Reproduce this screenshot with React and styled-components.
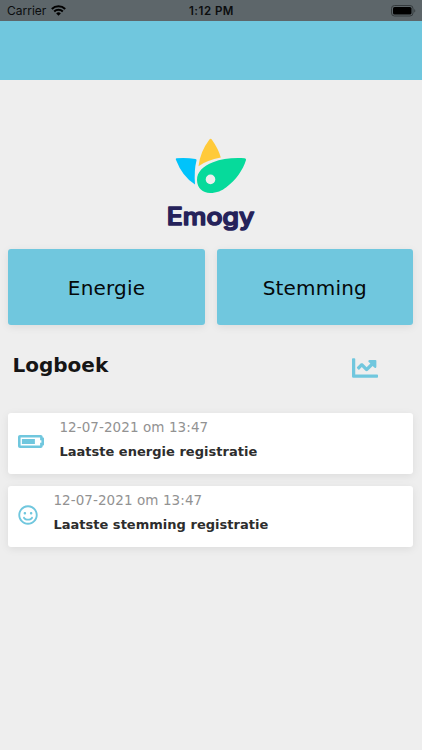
import React from "react";
import styled, { createGlobalStyle } from "styled-components";
import { FaChartLine, FaBatteryThreeQuarters, FaRegSmile } from "react-icons/fa";

const GlobalStyle = createGlobalStyle`
  * { box-sizing: border-box; }
  body { margin: 0; background: #eeeeee; }
`;

const Screen = styled.div`
  display: flex;
  flex-direction: column;
  width: 100%;
  height: 750px;
  background: #eeeeee;
  font-family: Verdana, "DejaVu Sans", sans-serif;
  overflow: hidden;
`;

const StatusBar = styled.div`
  display: grid;
  grid-template-columns: 1fr auto 1fr;
  align-items: center;
  flex: none;
  height: 21px;
  padding: 1px 6px 0 7px;
  background: #5d666a;
  color: #0b0d0e;
  font: 400 12px/20px Inter, sans-serif;
`;

const Carrier = styled.div`
  display: flex;
  align-items: center;
  gap: 5px;
`;

const Clock = styled.div`
  font-weight: 600;
  font-size: 11.5px;
  letter-spacing: 0.5px;
`;

const WifiIcon = styled.svg`
  margin-bottom: 2px;
`;

const BatteryLevel = styled.svg`
  justify-self: end;
  margin-bottom: 1px;
`;

const Header = styled.header`
  flex: none;
  height: 59px;
  background: #70c7de;
`;

const Logo = styled.svg`
  display: block;
  flex: none;
  width: 100px;
  height: 110px;
  margin: 50px 0 0 160px;
`;

const Actions = styled.div`
  display: grid;
  grid-template-columns: 1fr 1fr;
  gap: 12px;
  margin: 9px 9px 0 8.4px;
`;

const ActionButton = styled.button`
  height: 76px;
  padding: 2px 0 0;
  border: 0;
  border-radius: 3px;
  background: #70c7de;
  box-shadow: 0 2px 8px rgba(0, 0, 0, 0.08);
  color: #05090a;
  font: 400 20px/24px Verdana, "DejaVu Sans", sans-serif;
  letter-spacing: 0.2px;
`;

const SectionHead = styled.div`
  display: flex;
  justify-content: space-between;
  align-items: center;
  height: 30px;
  margin: 25px 43.6px 0 12.5px;
  color: #70c7de;
`;

const SectionTitle = styled.h2`
  margin: 0;
  color: #151515;
  font-size: 20px;
  line-height: 30px;
`;

const ChartIcon = styled(FaChartLine)`
  margin-top: 6px;
`;

const LogList = styled.div`
  display: flex;
  flex-direction: column;
  gap: 12px;
  margin: 33px 9px 0 8.4px;
`;

const LogCard = styled.article`
  display: flex;
  align-items: center;
  gap: 15.4px;
  height: 61px;
  padding: 0 0 4px 9.6px;
  border-radius: 3px;
  background: #ffffff;
  box-shadow: 0 2px 8px rgba(0, 0, 0, 0.08);
  color: #70c7de;
`;

const LogText = styled.div`
  padding-bottom: 5px;
`;

const LogDate = styled.div`
  color: #929292;
  font-size: 13.5px;
  line-height: 24px;
  letter-spacing: 0.08px;
`;

const LogTitle = styled.div`
  color: #2d2d2d;
  font-size: 13px;
  font-weight: 700;
  line-height: 25px;
  letter-spacing: 0.02px;
`;

const BatteryIcon = styled(FaBatteryThreeQuarters)`
  width: 26px;
  height: 21px;
`;

const SmileIcon = styled(FaRegSmile)`
  width: 20px;
  height: 20px;
`;

const entries = [
  { id: "energy", Icon: BatteryIcon, title: "Laatste energie registratie" },
  { id: "mood", Icon: SmileIcon, title: "Laatste stemming registratie" },
];

export default function App() {
  return (
    <>
      <GlobalStyle />
      <Screen>
        <StatusBar>
          <Carrier>
            Carrier
            <WifiIcon width="15" height="11" viewBox="0 0 15 11" fill="none" stroke="#000" strokeWidth="2">
              <path d="M.8 4a9.6 9.6 0 0 1 13.4 0M3.2 6.5a6.1 6.1 0 0 1 8.6 0" />
              <path d="M5.2 8.4a3.3 3.3 0 0 1 4.6 0L7.5 10.7z" fill="#000" stroke="none" />
            </WifiIcon>
          </Carrier>
          <Clock>1:12 PM</Clock>
          <BatteryLevel width="25" height="12" viewBox="0 0 25 12">
            <rect x=".5" y=".5" width="21.5" height="10.5" rx="3" fill="none" stroke="#343a3d" />
            <rect x="2" y="2" width="18.5" height="7.5" rx="1.6" fill="#000" />
            <path d="M23.3 4v3.6c1.3-.5 1.3-3.1 0-3.6z" fill="#343a3d" />
          </BatteryLevel>
        </StatusBar>
        <Header />
        <Logo viewBox="0 0 100 110">
          <path d="M16.5 28.3Q26 27.4 35.5 29Q37.3 29.5 36.4 31Q34 40 35 54.6Q22.5 47 15.8 29.6Q15.5 28.5 16.5 28.3Z" fill="#00c3fb" />
          <path d="M49.4 9.5Q50.6 8 51.8 9.5Q58.5 19 60.8 27.6Q47 30 38.5 36.3Q40 22 49.4 9.5Z" fill="#ffca3a" />
          <path d="M37 50C37 58 43 63 50 63C57 63 62 60.5 66 57.5C76 50 83 40 86 30C86.2 29 85.5 28.3 84.5 28.2C72 27.5 62 28.7 53 32.3C43 36.3 37 42 37 50Z" fill="#06da9b" />
          <circle cx="50.5" cy="49.4" r="4.8" fill="#eeeeee" />
          <text x="6.8" y="95.3" textLength="87.5" lengthAdjust="spacingAndGlyphs" fontFamily="Inter, sans-serif" fontWeight="500" fontSize="24" fill="#25225a" stroke="#25225a" strokeWidth="1.5" strokeLinejoin="round">Emogy</text>
        </Logo>
        <Actions>
          <ActionButton>Energie</ActionButton>
          <ActionButton>Stemming</ActionButton>
        </Actions>
        <SectionHead>
          <SectionTitle>Logboek</SectionTitle>
          <ChartIcon size={26} />
        </SectionHead>
        <LogList>
          {entries.map(({ id, Icon, title }) => (
            <LogCard key={id}>
              <Icon />
              <LogText>
                <LogDate>12-07-2021 om 13:47</LogDate>
                <LogTitle>{title}</LogTitle>
              </LogText>
            </LogCard>
          ))}
        </LogList>
      </Screen>
    </>
  );
}
